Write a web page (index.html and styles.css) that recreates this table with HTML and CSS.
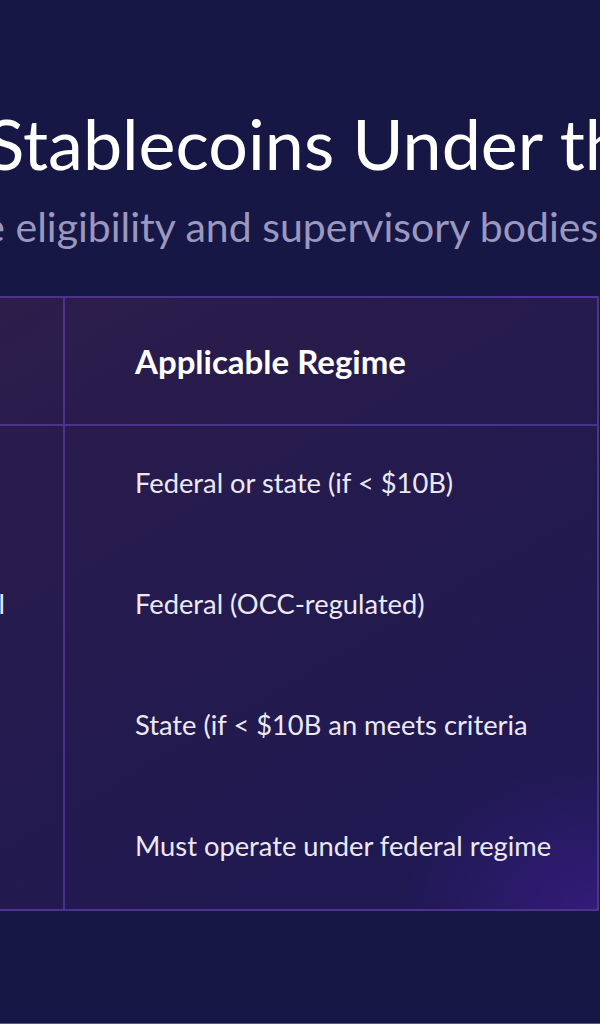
FILE: index.html
```html
<!DOCTYPE html>
<html lang="en">
<head>
<meta charset="utf-8">
<title>Stablecoins Under the GENIUS Act</title>
<link rel="stylesheet" href="styles.css">
</head>
<body>
<div class="viewport">
  <main class="slide">
    <header class="slide-head">
      <h1 class="title">Stablecoins Under the GENIUS Act</h1>
      <p class="subtitle">Issuer type and size determine eligibility and supervisory bodies under the new federal payment stablecoin framework.</p>
    </header>
    <div class="regime" role="table">
      <div class="cell head" role="columnheader">Issuer Type</div>
      <div class="cell head" role="columnheader">Charter</div>
      <div class="cell head" role="columnheader">Applicable Regime</div>

      <div class="cell" role="cell">Nonbank issuer</div>
      <div class="cell" role="cell">State license</div>
      <div class="cell" role="cell">Federal or state (if &lt; $10B)</div>

      <div class="cell" role="cell">Uninsured bank</div>
      <div class="cell" role="cell">Uninsured national</div>
      <div class="cell" role="cell">Federal (OCC-regulated)</div>

      <div class="cell" role="cell">Qualified issuer</div>
      <div class="cell" role="cell">State charter</div>
      <div class="cell" role="cell">State (if &lt; $10B an meets criteria</div>

      <div class="cell" role="cell">Large issuer</div>
      <div class="cell" role="cell">Federal charter</div>
      <div class="cell" role="cell">Must operate under federal regime</div>
    </div>
  </main>
</div>
</body>
</html>
```
FILE: styles.css
```css
html, body { margin: 0; padding: 0; }
body {
  background: #171746;
  font-family: Lato, "Noto Sans", sans-serif;
  overflow: hidden;
}
.viewport {
  width: 600px;
  height: 1023px;
  border-bottom: 1px solid #56568a;
  overflow: hidden;
}
.slide {
  width: 2640px;
  margin-left: -800px;
  display: flex;
  flex-direction: column;
  padding-top: 101px;
}
.slide-head {
  display: flex;
  flex-direction: column;
  align-items: center;
  white-space: nowrap;
}
.title {
  margin: 0;
  font-size: 70px;
  line-height: 84px;
  font-weight: 400;
  color: #ffffff;
}
.subtitle {
  margin: 17px 0 0;
  font-size: 41px;
  line-height: 49px;
  color: #9b98bf;
}
.regime {
  margin-top: 45px;
  width: 1399px;
  box-sizing: border-box;
  display: grid;
  grid-template-columns: 505px 356px 534px;
  grid-template-rows: 128px repeat(4, 120.75px);
  border: 2px solid rgba(120, 80, 220, 0.45);
  background:
    radial-gradient(200px 150px at 100% 100%, rgba(52, 28, 125, 0.9), rgba(52, 28, 125, 0)),
    linear-gradient(150deg, #2c1d4b 0%, #231a4f 55%, #1e1853 100%) right / 600px 100% no-repeat,
    #2c1d4b;
}
.cell {
  display: flex;
  align-items: center;
  padding: 0 0 7px 70px;
  font-size: 27.3px;
  color: #ece9f5;
  white-space: nowrap;
}
.cell:nth-child(3n+2), .cell:nth-child(3n) {
  border-left: 2px solid rgba(120, 80, 220, 0.45);
}
.head {
  padding-bottom: 0;
  font-size: 33px;
  font-weight: 700;
  color: #ffffff;
  border-bottom: 2px solid rgba(120, 80, 220, 0.45);
}
```
